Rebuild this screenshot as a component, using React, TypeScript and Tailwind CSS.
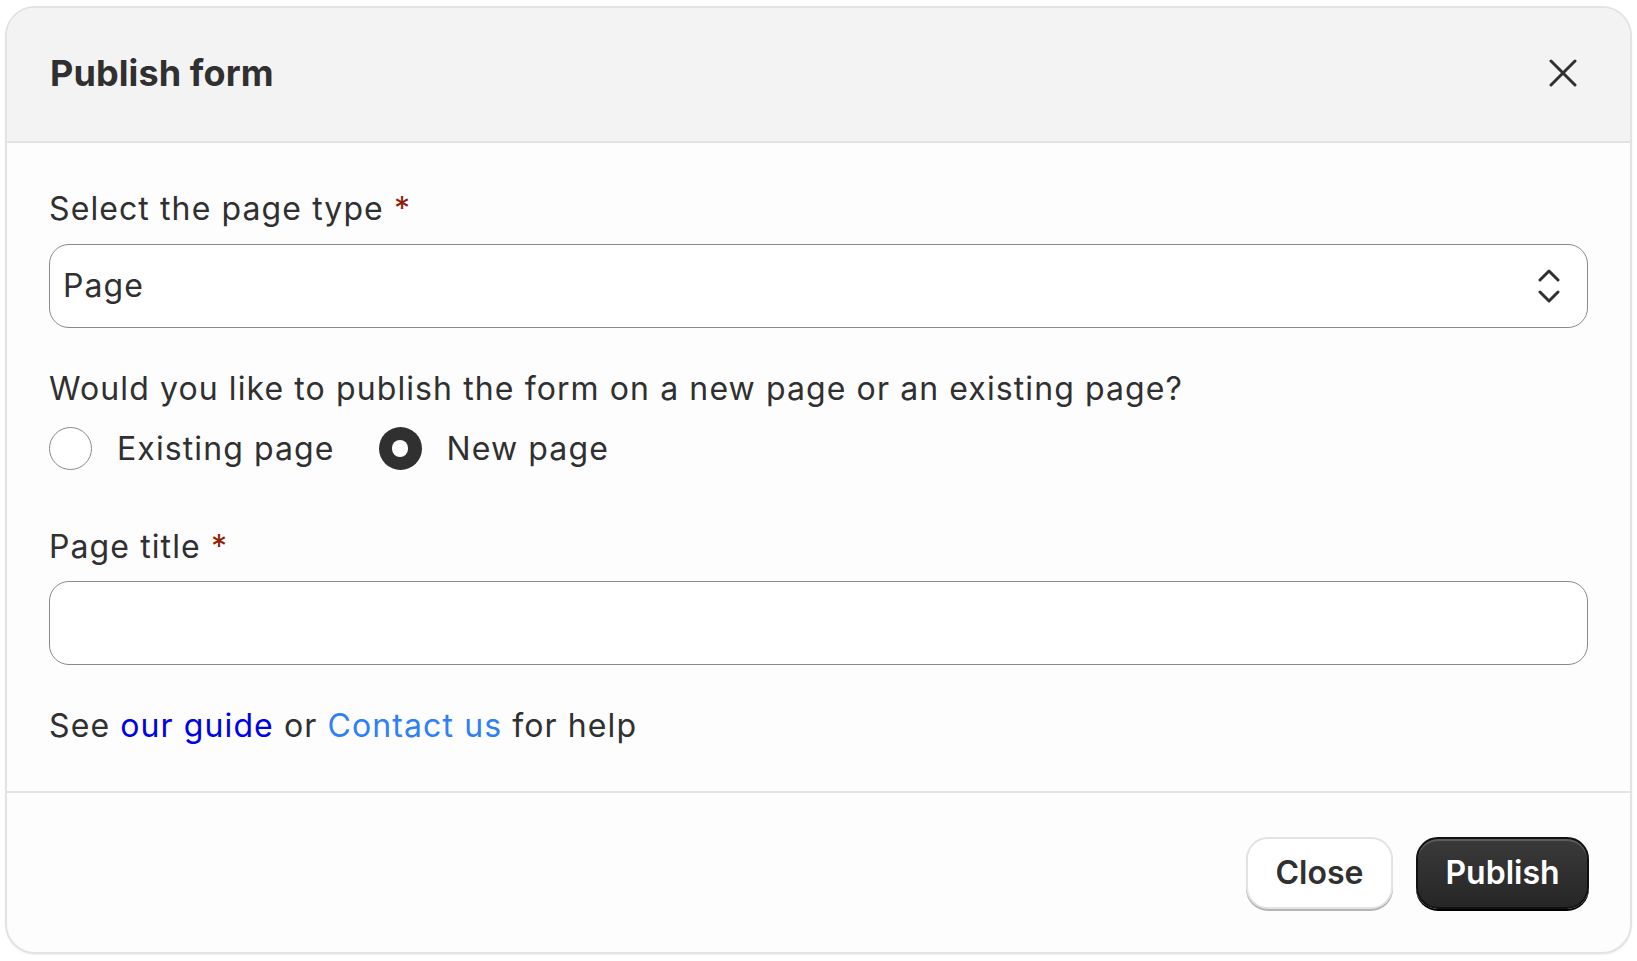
import React from "react";

const font = { fontFamily: "Inter, 'Noto Sans', sans-serif" };

const CloseIcon = () => (
  <svg width="28" height="28" viewBox="0 0 28 28" fill="none">
    <path d="M2 2L26 26M26 2L2 26" stroke="#303030" strokeWidth="3" strokeLinecap="round" />
  </svg>
);

const Chevrons = () => (
  <svg width="22" height="34" viewBox="0 0 22 34" fill="none">
    <path d="M2 11L11 2L20 11" stroke="#303030" strokeWidth="3" strokeLinecap="round" strokeLinejoin="round" />
    <path d="M2 23L11 32L20 23" stroke="#303030" strokeWidth="3" strokeLinecap="round" strokeLinejoin="round" />
  </svg>
);

const Radio = ({ checked, label }: { checked?: boolean; label: string }) => (
  <label className="flex items-center gap-[25px]">
    {checked ? (
      <span className="w-[43px] h-[43px] rounded-full bg-[#303030] flex items-center justify-center">
        <span className="w-[16px] h-[17px] rounded-full bg-white" />
      </span>
    ) : (
      <span className="w-[43px] h-[43px] rounded-full border-[1.5px] border-[#8a8a8a] bg-white" />
    )}
    <span>{label}</span>
  </label>
);

export default function App() {
  return (
    <div className="min-h-screen bg-white pt-[6px] pl-[5px] text-[#303030]" style={font}>
      <div className="w-[1627px] h-[948px] rounded-[30px] border-2 border-[#e3e3e3] bg-[#fdfdfd] overflow-hidden flex flex-col shadow-[0_1px_2px_rgba(0,0,0,0.06)]">
        {/* Header */}
        <div className="h-[135px] shrink-0 bg-[#f3f3f3] border-b-2 border-[#e3e3e3] flex items-center justify-between pl-[43px] pr-[53px] pb-[3px]">
          <h2 className="text-[36px] leading-[44px] font-[650] tracking-[0.1px]">Publish form</h2>
          <button className="flex items-center justify-center">
            <CloseIcon />
          </button>
        </div>

        {/* Body */}
        <div className="flex-1 px-[42px] pt-[46px] text-[32px] leading-[40px] tracking-[1.1px]">
          <div className="mb-[15px]">
            Select the page type <span className="text-[#8e1f0b]">*</span>
          </div>
          <div className="h-[84px] rounded-[20px] border-[1.5px] border-[#8a8a8a] bg-white flex items-center justify-between pl-[13px] pr-[27px]">
            <span>Page</span>
            <Chevrons />
          </div>

          <div className="mt-[41px]">Would you like to publish the form on a new page or an existing page?</div>
          <div className="mt-[18px] flex items-center gap-[44px]">
            <Radio label="Existing page" />
            <Radio checked label="New page" />
          </div>

          <div className="mt-[57px] mb-[14px]">
            Page title <span className="text-[#8e1f0b]">*</span>
          </div>
          <div className="h-[84px] rounded-[20px] border-[1.5px] border-[#8a8a8a] bg-white" />

          <p className="mt-[41px]">
            See <a className="text-[#0000e6]">our guide</a> or{" "}
            <a className="text-[#2f7ff6]">Contact us</a> for help
          </p>
        </div>

        {/* Footer */}
        <div className="h-[161px] shrink-0 border-t-2 border-[#e3e3e3] flex items-center justify-end gap-[23px] pr-[41px]">
          <button className="h-[72px] w-[147px] rounded-[22px] bg-white border-2 border-[#e3e3e3] shadow-[0_2px_0_#b5b5b5] text-[32px] font-[600] text-[#303030]">
            Close
          </button>
          <button className="h-[72px] w-[173px] rounded-[22px] bg-gradient-to-b from-[#3a3a3a] to-[#262626] border-2 border-[#111] shadow-[0_2px_0_#000,inset_0_2px_0_rgba(255,255,255,0.18)] text-[32px] font-[600] text-white">
            Publish
          </button>
        </div>
      </div>
    </div>
  );
}
